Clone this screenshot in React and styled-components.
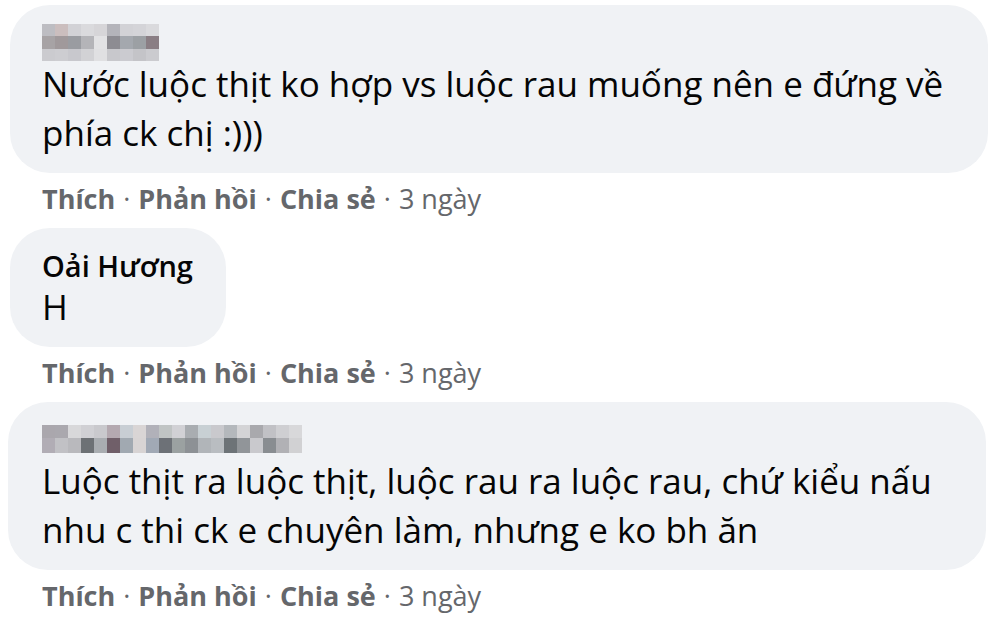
import React from 'react';
import styled, { createGlobalStyle } from 'styled-components';

const GlobalStyle = createGlobalStyle`
  html, body {
    margin: 0;
    padding: 0;
    background: #ffffff;
  }
  body {
    font-family: "Open Sans", "Noto Sans", "Liberation Sans", sans-serif;
    color: #050505;
  }
`

// mosaic colours for the blurred names (rows of cells)
const blurA = {
  cell: 13,
  rowH: [12, 13, 12],
  rows: [
    ['#bdbdc2', '#cbbebe', '#d2d2d6', '#dadadd', '#d6d5d8', '#b4b4ba', '#d2d2d6', '#d4d4d8', '#dadadd'],
    ['#a7a3a5', '#a0999b', '#9a9ca1', '#b4b4b8', '#e2e2e4', '#8d8c92', '#a4a8ae', '#9ca0a4', '#8a7e84'],
    ['#cbcbcf', '#cdcdd1', '#c8c8cd', '#d2d2d5', '#e0e0e2', '#c8c8cc', '#cbcbd0', '#c4c4c8', '#cbcbcf'],
  ],
}

const blurB = {
  cell: 13,
  rowH: [13, 15],
  rows: [
    ['#aaa7ad', '#aaa8ae', '#d8d8da', '#d0d0d4', '#c9c9cd', '#b4a9b0', '#c8ced4', '#d9d5d5', '#b1b1b9', '#c0c4c4',
     '#d1d1d5', '#a9adb1', '#c8d0d4', '#c9c9cd', '#b4b8bc', '#d4d4d6', '#a9a9ad', '#c1c1c5', '#cfcfd2', '#d8d8da'],
    ['#b1adb5', '#c1c1c5', '#b9b9bd', '#6d7175', '#a9adb1', '#6f5f69', '#a1a9b1', '#d8d4d4', '#a1a9b5', '#6d7177',
     '#9ba1a1', '#8d9195', '#b1b5b9', '#b9bdc1', '#6d7377', '#919599', '#c9c9cd', '#898d91', '#b1b1b5', '#d1d1d3'],
  ],
}

const comments = [
  { id: 1, blur: blurA, lines: ['Nước luộc thịt ko hợp vs luộc rau muống nên e đứng về', 'phía ck chị :)))'], wide: true },
  { id: 2, name: 'Oải Hương', lines: ['H'] },
  { id: 3, blur: blurB, lines: ['Luộc thịt ra luộc thịt, luộc rau ra luộc rau, chứ kiểu nấu', 'nhu c thi ck e chuyên làm, nhưng e ko bh ăn'], wide: true, shift: -2 },
]

function BlurredName({ data }) {
  const width = data.cell * data.rows[0].length
  const height = data.rowH.reduce((a, b) => a + b, 0)
  let y = 0
  return (
    <svg width={width} height={height} viewBox={`0 0 ${width} ${height}`}>
      <defs>
        <filter id="soft" x="-5%" y="-10%" width="110%" height="120%">
          <feGaussianBlur stdDeviation="0.7" />
        </filter>
      </defs>
      <g filter="url(#soft)">
        {data.rows.map((row, r) => {
          const top = y
          y += data.rowH[r]
          return row.map((c, i) => (
            <rect key={r + '-' + i} x={i * data.cell} y={top} width={data.cell + 0.5} height={data.rowH[r] + 0.5} fill={c} />
          ))
        })}
      </g>
    </svg>
  )
}

function Comment({ c }) {
  return (
    <Item>
      <Bubble $wide={c.wide} $shift={c.shift}>
        <NameRow>
          {c.name ? <Name>{c.name}</Name> : <BlurredName data={c.blur} />}
        </NameRow>
        <Body>
          {c.lines.map((l, i) => <Line key={i}>{l}</Line>)}
        </Body>
      </Bubble>
      <Actions>
        <Action>Thích</Action>
        <Dot>·</Dot>
        <Action>Phản hồi</Action>
        <Dot>·</Dot>
        <Action>Chia sẻ</Action>
        <Dot>·</Dot>
        <Time>3 ngày</Time>
      </Actions>
    </Item>
  )
}

export default function App() {
  return (
    <>
      <GlobalStyle />
      <Page>
        {comments.map(c => <Comment key={c.id} c={c} />)}
      </Page>
    </>
  )
}

const Page = styled.div`
  display: flex;
  flex-direction: column;
  padding: 5px 2px 0 10px;
  width: 990px;
  box-sizing: border-box;
`

const Item = styled.div`
  display: flex;
  flex-direction: column;
  align-items: flex-start;
`

const Bubble = styled.div`
  background: #f0f2f5;
  border-radius: 40px;
  padding: 18px 33px 16px 32px;
  box-sizing: border-box;
  width: ${p => (p.$wide ? '978px' : 'auto')};
  margin-left: ${p => p.$shift || 0}px;
  padding-left: ${p => 32 - (p.$shift || 0)}px;
`

const NameRow = styled.div`
  height: 36px;
  display: flex;
  align-items: center;
  svg {
    display: block;
    margin-top: 2px;
  }
`

const Name = styled.span`
  font-size: 29px;
  font-weight: 600;
  line-height: 36px;
  padding-top: 4px;
`

const Body = styled.div`
  font-size: 35px;
  line-height: 49px;
`

const Line = styled.div`
  white-space: nowrap;
`

const Actions = styled.div`
  height: 50px;
  margin-bottom: 5px;
  display: flex;
  align-items: center;
  padding-left: 32px;
  color: #65676b;
  font-size: 27px;
  white-space: pre;
`

const Action = styled.span`
  font-weight: 700;
`

const Dot = styled.span`
  padding: 0 8px;
`

const Time = styled.span`
  font-weight: 400;
`
